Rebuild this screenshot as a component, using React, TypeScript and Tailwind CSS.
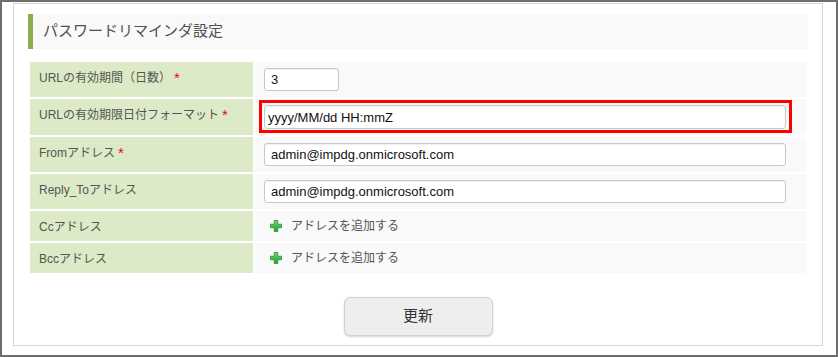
const font = { fontFamily: '"Liberation Sans", "Noto Sans CJK JP", sans-serif' };

function Required() {
  return (
    <span className="ml-[3px] text-[15px] leading-none text-[#e5004f] relative top-[1px] align-top">*</span>
  );
}

function PlusIcon() {
  return (
    <svg width="12" height="12" viewBox="0 0 12 12" className="shrink-0">
      <defs>
        <linearGradient id="plusg" x1="0" y1="0" x2="0" y2="1">
          <stop offset="0" stopColor="#6fd36a" />
          <stop offset="1" stopColor="#23a02c" />
        </linearGradient>
      </defs>
      <path
        d="M4.2 0.5h3.6v3.7h3.7v3.6h-3.7v3.7h-3.6v-3.7h-3.7v-3.6h3.7z"
        fill="url(#plusg)"
        stroke="#2b8a2f"
        strokeWidth="0.7"
      />
    </svg>
  );
}

function AddLink() {
  return (
    <div className="flex items-center h-[18px] gap-[9px] pl-[6px]">
      <PlusIcon />
      <span className="text-[12px] text-[#555]">アドレスを追加する</span>
    </div>
  );
}

function TextInput({ value, width, tight }: { value: string; width: string; tight?: boolean }) {
  return (
    <input
      readOnly
      value={value}
      className={`${width} ${tight ? 'h-[24px] pl-[3px]' : 'h-[23px] pl-[6px]'} block bg-white border border-[#c8c8c8] rounded-[3px] text-[13px] text-[#111] outline-none shadow-[inset_0_1px_1px_rgba(0,0,0,0.06)]`}
      style={font}
    />
  );
}

const rows = [
  { label: 'URLの有効期間（日数）', required: true, kind: 'short', value: '3' },
  { label: 'URLの有効期限日付フォーマット', required: true, kind: 'marked', value: 'yyyy/MM/dd HH:mmZ' },
  { label: 'Fromアドレス', required: true, kind: 'long', value: 'admin@impdg.onmicrosoft.com' },
  { label: 'Reply_Toアドレス', required: false, kind: 'long', value: 'admin@impdg.onmicrosoft.com' },
  { label: 'Ccアドレス', required: false, kind: 'add', value: '' },
  { label: 'Bccアドレス', required: false, kind: 'add', value: '' },
];

export default function App() {
  return (
    <div className="w-[838px] h-[357px] border-2 border-[#6e6e6e] bg-white pt-[1px] pl-[11px] pr-[13px]" style={font}>
      <div className="h-[343px] border border-[#d4d4d4] px-[14px] pt-[10px]">
        {/* Header */}
        <div className="h-[35px] bg-[#f9f9f9] flex items-center border-l-[5px] border-[#8aad4b] pl-[10px]">
          <h2 className="text-[15px] text-[#505050] font-normal">パスワードリマインダ設定</h2>
        </div>

        {/* Settings table */}
        <table className="mt-[11px] w-[780px] border-separate border-spacing-[2px] table-fixed">
          <colgroup>
            <col className="w-[223px]" />
            <col />
          </colgroup>
          <tbody>
            {rows.map((row) => (
              <tr key={row.label}>
                <td className="bg-[#ddeac7] align-top pl-[9px] pt-[7px] text-[12px] leading-[18px] text-[#555]">
                  {row.label}
                  {row.required && <Required />}
                </td>
                <td className="bg-[#f9f9f9] align-top pl-[9px] pr-[20px] py-[6px]">
                  {row.kind === 'short' && <TextInput value={row.value} width="w-[75px]" />}
                  {row.kind === 'long' && <TextInput value={row.value} width="w-[522px]" />}
                  {row.kind === 'marked' && (
                    <div className="relative w-[522px]">
                      <TextInput value={row.value} width="w-[522px]" tight />
                      <span className="absolute -left-[5px] -top-[5px] -right-[6px] -bottom-[4px] border-[3px] border-[#ff0000] pointer-events-none" />
                    </div>
                  )}
                  {row.kind === 'add' && <AddLink />}
                </td>
              </tr>
            ))}
          </tbody>
        </table>

        {/* Submit */}
        <div className="flex justify-center mt-[22px]">
          <button className="w-[149px] h-[39px] rounded-[6px] border border-[#d2d2d2] bg-[#eeeeee] shadow-[0_1px_2px_rgba(0,0,0,0.18)] text-[15px] text-[#333]">
            更新
          </button>
        </div>
      </div>
    </div>
  );
}
